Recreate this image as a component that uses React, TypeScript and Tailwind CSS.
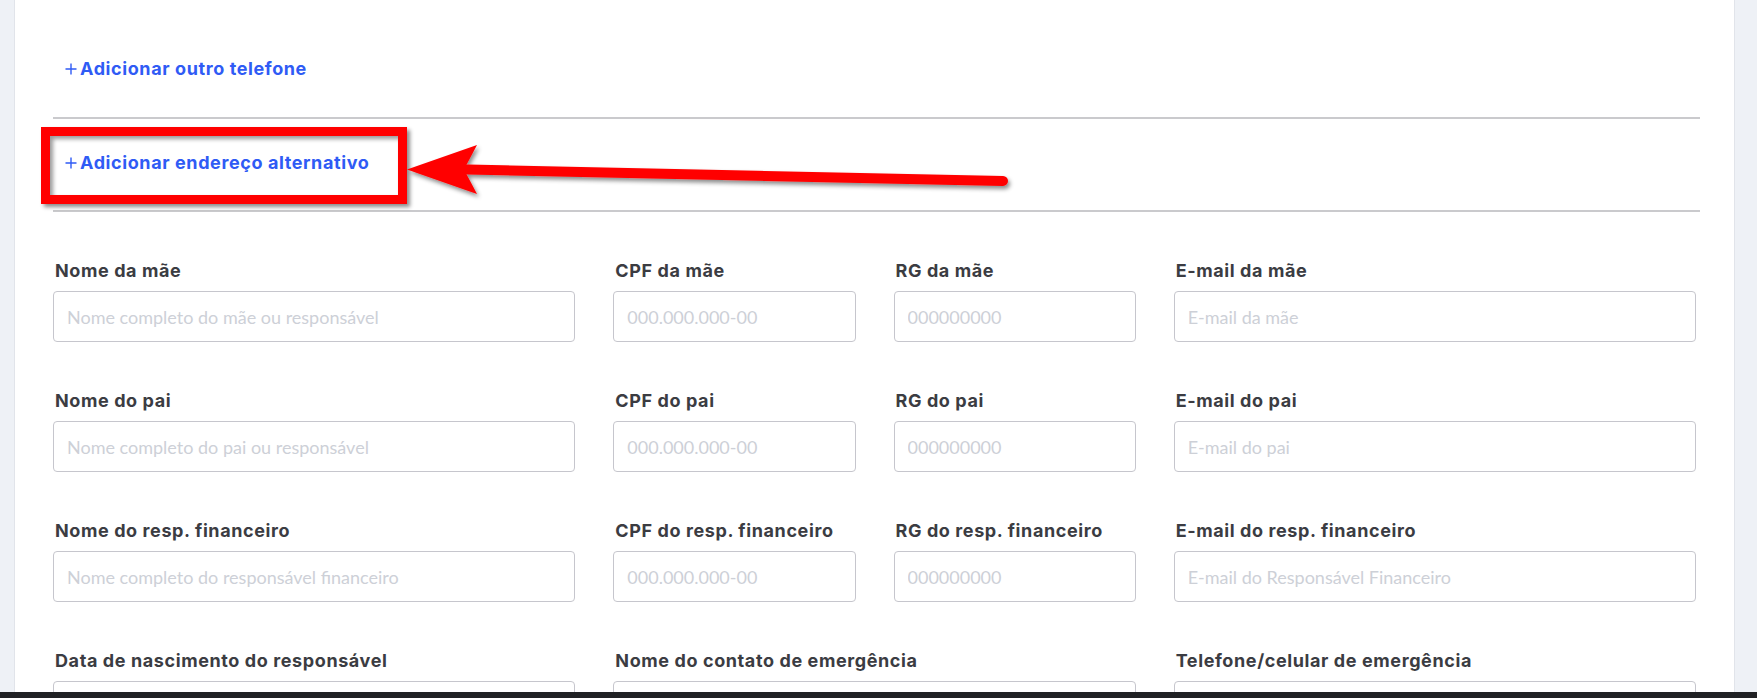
type Field = {
  label: string
  placeholder: string
  span: "col-span-4" | "col-span-2"
}

const rows: Field[][] = [
  [
    { label: "Nome da mãe", placeholder: "Nome completo do mãe ou responsável", span: "col-span-4" },
    { label: "CPF da mãe", placeholder: "000.000.000-00", span: "col-span-2" },
    { label: "RG da mãe", placeholder: "000000000", span: "col-span-2" },
    { label: "E-mail da mãe", placeholder: "E-mail da mãe", span: "col-span-4" },
  ],
  [
    { label: "Nome do pai", placeholder: "Nome completo do pai ou responsável", span: "col-span-4" },
    { label: "CPF do pai", placeholder: "000.000.000-00", span: "col-span-2" },
    { label: "RG do pai", placeholder: "000000000", span: "col-span-2" },
    { label: "E-mail do pai", placeholder: "E-mail do pai", span: "col-span-4" },
  ],
  [
    { label: "Nome do resp. financeiro", placeholder: "Nome completo do responsável financeiro", span: "col-span-4" },
    { label: "CPF do resp. financeiro", placeholder: "000.000.000-00", span: "col-span-2" },
    { label: "RG do resp. financeiro", placeholder: "000000000", span: "col-span-2" },
    { label: "E-mail do resp. financeiro", placeholder: "E-mail do Responsável Financeiro", span: "col-span-4" },
  ],
  [
    { label: "Data de nascimento do responsável", placeholder: "", span: "col-span-4" },
    { label: "Nome do contato de emergência", placeholder: "", span: "col-span-4" },
    { label: "Telefone/celular de emergência", placeholder: "", span: "col-span-4" },
  ],
]

function PlusLink({ text }: { text: string }) {
  return (
    <button
      type="button"
      className="flex h-6 items-center pl-3 font-['Inter',sans-serif] text-[18px] font-bold leading-6 tracking-[0.6px] text-[#2f5bf5]"
    >
      <svg width="12" height="12" viewBox="0 0 12 12" className="mr-[3px]" aria-hidden>
        <path d="M6 0.5v11M0.5 6h11" stroke="currentColor" strokeWidth="1.4" />
      </svg>
      {text}
    </button>
  )
}

function FormField({ field }: { field: Field }) {
  return (
    <div className={`${field.span} flex flex-col pb-[47px]`}>
      <label className="mb-2 pl-[2px] font-['Inter',sans-serif] text-[18px] font-bold leading-6 tracking-[0.6px] text-[#3b3c42]">
        {field.label}
      </label>
      <input
        placeholder={field.placeholder}
        className="h-[51px] w-full rounded-[4px] border border-[#c6c6cd] bg-white px-[13px] font-['Lato',sans-serif] text-[18px] text-[#3b3c42] outline-none placeholder:text-[#cdd0d7]"
      />
    </div>
  )
}

export default function App() {
  return (
    <div className="relative h-[698px] w-full overflow-hidden bg-[#eef1f6]">
      <div className="flex h-[692px] pl-[14px] pr-[22px]">
        <div className="flex-1 overflow-hidden border-x border-[#e1e4ea] bg-white px-[38px] pt-[57px]">
          <PlusLink text="Adicionar outro telefone" />
          <div className="mr-[-4px] mt-[36px] h-[2px] bg-[#cacacd]" />
          <div className="pb-[35px] pt-[32px]">
            <PlusLink text="Adicionar endereço alternativo" />
          </div>
          <div className="mr-[-4px] h-[2px] bg-[#cacacd]" />

          <div className="grid grid-cols-12 gap-x-[38px] pt-[47px]">
            {rows.map((row) =>
              row.map((field) => <FormField key={field.label} field={field} />)
            )}
          </div>
        </div>
      </div>
      <div className="h-[6px] bg-[#202124]" />

      {/* annotation: red box */}
      <div className="pointer-events-none absolute left-[41px] top-[127px] h-[77px] w-[366px] border-[9px] border-[#ff0000] shadow-[3px_3px_4px_rgba(0,0,0,0.45),inset_3px_3px_4px_rgba(0,0,0,0.4)]" />

      {/* annotation: arrow */}
      <svg
        className="pointer-events-none absolute left-0 top-0"
        width="1757"
        height="698"
        viewBox="0 0 1757 698"
        aria-hidden
      >
        <defs>
          <filter id="arrowShadow" x="-5%" y="-50%" width="110%" height="200%">
            <feDropShadow dx="2" dy="3" stdDeviation="2" floodColor="#000" floodOpacity="0.45" />
          </filter>
        </defs>
        <g filter="url(#arrowShadow)" fill="#ff0000">
          <line x1="468" y1="169.5" x2="1003" y2="181" stroke="#ff0000" strokeWidth="10" strokeLinecap="round" />
          <polygon points="407,169.5 477,145 464,169.5 477,194" />
        </g>
      </svg>
    </div>
  )
}
